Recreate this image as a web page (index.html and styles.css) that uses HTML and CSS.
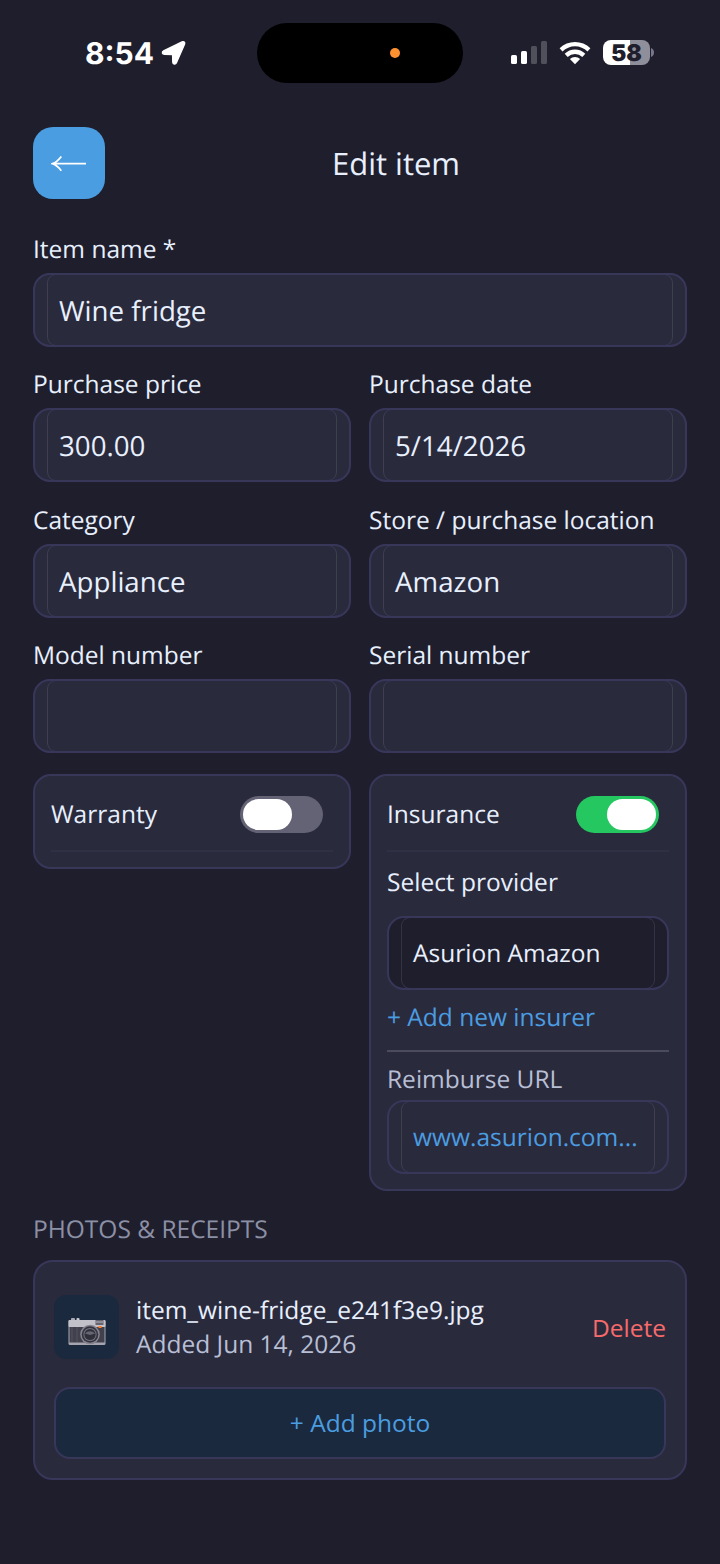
FILE: index.html
```html
<!DOCTYPE html>
<html lang="en">
<head>
<meta charset="utf-8">
<title>Edit item</title>
<link rel="stylesheet" href="styles.css">
</head>
<body>
<div class="status">
  <span class="time">8:54</span>
  <svg class="location" width="26" height="26" viewBox="0 0 26 26"><path d="M2.600 11 21 1.900c1.800-.9 3.300.5 2.500 2.300L15.400 22.800c-.9 2-3.500 1.600-3.600-.6l-.2-7.600-8.100-.4c-2.300-.1-2.900-2.200-.9-3.200Z" stroke="#fff" stroke-width="1.400" stroke-linejoin="round"/></svg>
  <div class="island"><span class="mic-dot"></span></div>
  <svg class="signal" width="36" height="24" viewBox="0 0 36 24"><rect x="0" y="14" width="6" height="9" rx="1.600"/><rect x="10" y="10" width="6" height="13" rx="1.600"/><g opacity=".22"><rect x="20" y="5" width="6" height="18" rx="1.600"/><rect x="30" y="0" width="6" height="23" rx="1.600"/></g></svg>
  <svg class="wifi" width="32" height="24" viewBox="0 0 32 24"><path d="M.6 7.200A22 22 0 0 1 31.400 7.200l-2.900 3.300a17.800 17.800 0 0 0-25 0Z"/><path d="M5.700 12.700a14.600 14.600 0 0 1 20.600 0l-3 3.200a10.400 10.400 0 0 0-14.600 0Z"/><path d="M10.900 18a7.400 7.400 0 0 1 10.200 0L16 23.300Z"/></svg>
  <div class="battery"><span class="charge">58</span><svg class="cap" width="4" height="9" viewBox="0 0 4 9"><path d="M0 0c4 1.500 4 7.500 0 9Z"/></svg></div>
</div>

<header class="header">
  <button class="back" aria-label="Back"><svg width="36" height="18" viewBox="0 0 36 18"><path d="M1.500 9.700H35M10.300 2.500C8 5.500 5 8.500 1.500 9.700c3.500 1.200 6.500 4 8.800 7"/></svg></button>
  <h1 class="title">Edit item</h1>
</header>

<main class="form">
  <div class="field wide"><label class="label">Item name *</label><div class="input"><span class="inner">Wine fridge</span></div></div>
  <div class="field"><label class="label">Purchase price</label><div class="input"><span class="inner">300.00</span></div></div>
  <div class="field"><label class="label">Purchase date</label><div class="input"><span class="inner">5/14/2026</span></div></div>
  <div class="field"><label class="label">Category</label><div class="input"><span class="inner">Appliance</span></div></div>
  <div class="field"><label class="label">Store / purchase location</label><div class="input"><span class="inner">Amazon</span></div></div>
  <div class="field"><label class="label">Model number</label><div class="input"><span class="inner"></span></div></div>
  <div class="field"><label class="label">Serial number</label><div class="input"><span class="inner"></span></div></div>

  <section class="card">
    <div class="card-head"><span>Warranty</span><span class="toggle"><span class="knob"></span></span></div>
  </section>
  <section class="card insurance">
    <div class="card-head"><span>Insurance</span><span class="toggle on"><span class="knob"></span></span></div>
    <div class="provider-label">Select provider</div>
    <div class="input small dark"><span class="inner">Asurion Amazon</span></div>
    <a class="add-insurer">+ Add new insurer</a>
    <div class="url-label">Reimburse URL</div>
    <div class="input small link"><span class="inner">www.asurion.com...</span></div>
  </section>
</main>

<h2 class="section-title">PHOTOS &amp; RECEIPTS</h2>
<section class="photos">
  <div class="file">
    <div class="thumb">
      <svg width="38" height="28" viewBox="0 0 38 28">
        <rect x="3" y="0" width="4" height="4" rx="1" fill="#aaa9b2"/><rect x="8.500" y="0" width="3" height="4" rx="1" fill="#c9c8cf"/>
        <rect x=".5" y="2" width="37" height="25" rx="1.500" fill="#a6a5af"/>
        <rect x=".5" y="2" width="37" height="7" rx="1" fill="#c2c1ca"/>
        <rect x="1.500" y="9" width="35" height="15.500" fill="#41404d"/>
        <path d="M4 9v15M9 9v15" stroke="#55535f" stroke-width="1"/>
        <rect x="27.500" y="2" width="8" height="5" fill="#656572"/><path d="M28 4h7" stroke="#b6b5be"/>
        <circle cx="22" cy="16.500" r="9.800" fill="#85848f"/><circle cx="22" cy="16.500" r="8.300" fill="#343440"/><circle cx="22" cy="16.500" r="6.600" fill="#737380"/><circle cx="22" cy="16.500" r="5.600" fill="#30303b"/>
        <path d="M17 15.500c3-3 7-3 10 0l-5 1.500Z" fill="#666673"/>
        <rect x="30.500" y="8" width="3" height="2" fill="#ff7b22"/>
      </svg>
    </div>
    <div class="meta"><div class="filename">item_wine-fridge_e241f3e9.jpg</div><div class="added">Added Jun 14, 2026</div></div>
    <button class="delete">Delete</button>
  </div>
  <button class="add-photo">+ Add photo</button>
</section>
</body>
</html>
```
FILE: styles.css
```css
* { box-sizing: border-box; }
body {
  margin: 0;
  width: 720px;
  height: 1564px;
  overflow: hidden;
  background: #1f1e2d;
  color: #e8f0fe;
  font-family: "Open Sans", "Noto Sans", sans-serif;
  font-size: 24.5px;
  line-height: 34px;
  text-rendering: geometricPrecision;
}
button { margin: 0; padding: 0; border: 0; background: none; font: inherit; }
svg { display: block; flex: none; }

.status { display: flex; align-items: center; height: 105px; padding-left: 85px; fill: #fff; }
.time { width: 76px; padding-top: 2px; font: 700 30px/36px Inter, sans-serif; color: #fff; }
.location { margin-top: 1px; }
.island {
  display: flex; align-items: center; justify-content: flex-end;
  width: 206px; height: 60px; margin-left: 70px; padding-right: 63px;
  border-radius: 30px; background: #000;
}
.mic-dot { width: 10px; height: 10px; border-radius: 50%; background: #ff9230; }
.signal { margin-left: 48px; }
.wifi { margin-left: 12px; }
.battery { display: flex; align-items: center; margin-left: 12px; gap: 1px; }
.charge {
  width: 47px; height: 25px; border-radius: 8px;
  background: linear-gradient(90deg, #fff 57%, #8f8f9b 57%);
  color: #1f1e2d; font: 900 23px/26px Inter, sans-serif; text-align: center;
}
.cap { fill: #77768a; }

.header { display: flex; align-items: center; height: 72px; margin: 22px 0 33px; padding: 0 33px; }
.back { display: flex; align-items: center; justify-content: center; width: 72px; height: 72px; border-radius: 20px; background: #4a9de0; }
.back path { fill: none; stroke: #fff; stroke-width: 1.8; }
.title { flex: 1; margin: 0; padding-top: 2px; font-size: 31px; font-weight: 400; line-height: 42px; text-align: center; }

.form { display: grid; grid-template-columns: 318px 318px; column-gap: 18px; row-gap: 20.4px; align-items: start; padding: 0 33px; }
.wide { grid-column: span 2; }
.label { display: block; height: 41px; padding-top: 1px; white-space: nowrap; }
.input { height: 74px; padding: 0 12px; border: 2px solid #38375a; border-radius: 17px; background: #2a2a3d; font-size: 27.7px; }
.inner { display: block; height: 72px; margin-top: -1px; padding-left: 11px; border: 1px solid #3e3e4f; border-block-color: #38375a; border-radius: 9px; line-height: 72px; white-space: nowrap; }
.small { width: 282px; font-size: 24.5px; }
.small .inner { line-height: 71px; }
.dark { background: #1f1e2d; }
.dark .inner { border-inline-color: #343344; }
.link { color: #4a9de0; }

.card { padding: 0 16px 15px; border: 2px solid #38375a; border-radius: 18px; background: #2a2a3d; }
.card-head { display: flex; align-items: center; justify-content: space-between; height: 76px; padding: 3px 10px 0 0; border-bottom: 2px solid #303044; }
.card-head > span:first-child { padding-top: 2px; }
.toggle { display: flex; width: 83px; height: 37px; padding: 3px; border-radius: 19px; background: #636375; }
.knob { width: 49px; height: 31px; border-radius: 16px; background: #fff; }
.on { justify-content: flex-end; background: #24c760; }
.provider-label { height: 64px; padding-top: 14px; }
.add-insurer { display: block; height: 62px; padding-top: 11px; border-bottom: 2px solid #4c4b5e; color: #4a9de0; }
.url-label { height: 48px; padding-top: 11px; color: #b8bfd4; }

.section-title { margin: 22px 33px 13px; font-size: 24.5px; font-weight: 400; line-height: 34px; color: #8c90a5; }
.photos { height: 220px; margin: 0 33px; padding: 33px 19px 19px; border: 2px solid #38375a; border-radius: 20px; background: #2a2a3d; }
.file { display: flex; align-items: center; height: 65px; }
.thumb { display: flex; align-items: center; justify-content: center; width: 65px; height: 64px; padding-top: 9px; border-radius: 12px; background: #1a293d; }
.meta { flex: 1; margin-left: 17px; padding-top: 2px; color: #e8f0fe; }
.added { color: #b8bfd4; }
.delete { padding-top: 1px; color: #f66b6b; }
.add-photo { width: 100%; height: 72px; margin-top: 27px; padding-top: 1px; border: 2px solid #38375a; border-radius: 16px; background: #1a293d; color: #4a9de0; }
```
